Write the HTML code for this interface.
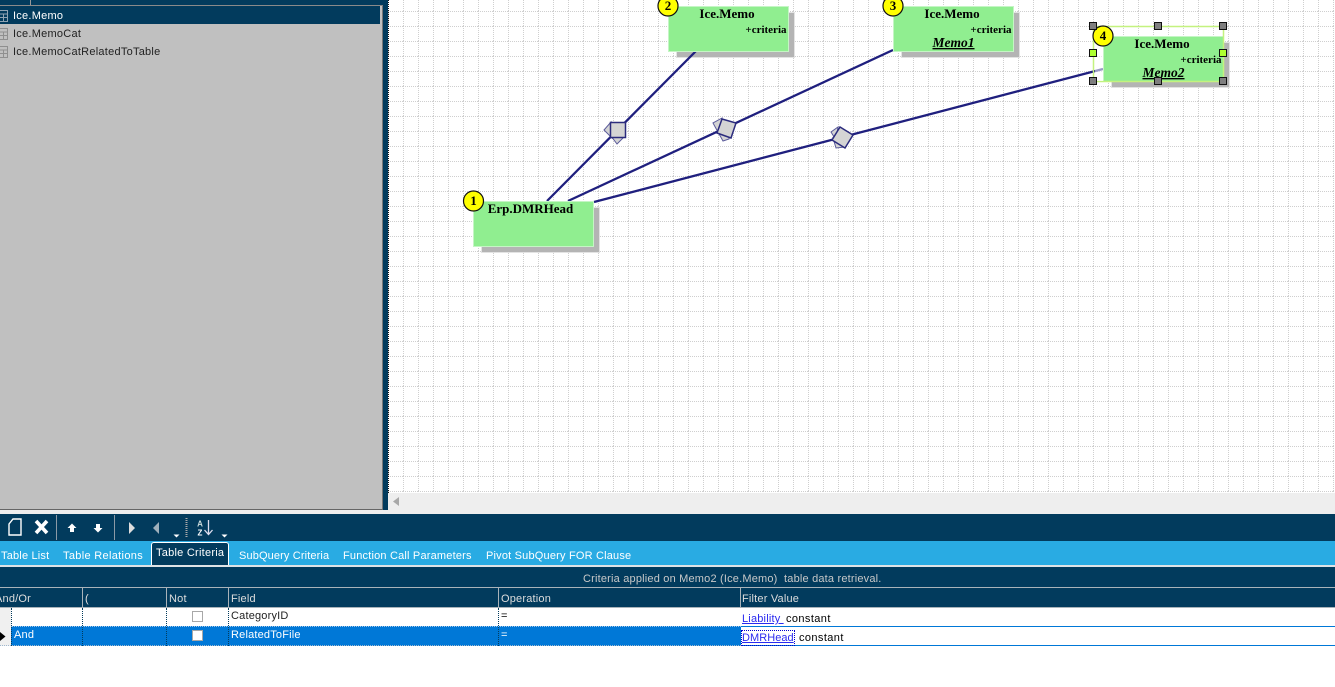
<!DOCTYPE html>
<html><head><meta charset="utf-8">
<style>
html,body{margin:0;padding:0;background:#fff}
body{width:1335px;height:687px;overflow:hidden;position:relative;font-family:"Liberation Sans",sans-serif;font-size:11px}
.a{position:absolute}
.t{position:absolute;white-space:pre;line-height:14px;letter-spacing:.19px}
.d{background:#023b5d}
.w{color:#fff}
.h{color:#ddd}
.tab{color:#fff;top:549px}
.v{position:absolute;width:0;border-left:1px dotted #023b5d}
</style></head><body>
<div class="a d" style="left:0;top:0;width:388px;height:5px"></div>
<div class="a" style="left:30px;top:0;width:1px;height:5px;background:#999"></div>
<div class="a" style="left:0;top:5px;width:383px;height:505px;background:#c0c0c0;border-top:1px solid #8a8a8a;border-bottom:1px solid #666;box-sizing:border-box;border-right:1px solid #777"></div>
<div class="a d" style="left:383px;top:0;width:5px;height:510px"></div>
<div class="a" style="left:0;top:510px;width:388px;height:4px;background:#eee"></div>
<div class="a d" style="left:0;top:6px;width:380px;height:18px"></div>
<svg class="a" style="left:0;top:10px" width="9" height="50">
<g fill="none" stroke="#8f8f8f"><path d="M-1 .5H7.500V11.500H-1M-1 4H7.500M3.500 4V11.500M-1 7.500H7.500" stroke="#8fa3b2"/>
<path d="M-1 18.500H7.500V29.500H-1M-1 22H7.500M3.500 22V29.500M-1 25.500H7.500"/>
<path d="M-1 36.500H7.500V47.500H-1M-1 40H7.500M3.500 40V47.500M-1 43.500H7.500"/></g></svg>
<div class="t w" style="left:13px;top:9px;letter-spacing:.25px">Ice.Memo</div>
<div class="t" style="left:13px;top:27px;color:#222;letter-spacing:.25px">Ice.MemoCat</div>
<div class="t" style="left:13px;top:45px;color:#222;letter-spacing:.25px">Ice.MemoCatRelatedToTable</div>

<svg class="a" style="left:388px;top:0;background:#fff" width="947" height="493" viewBox="388 0 947 493">
<defs><pattern id="g" x="388" y="11" width="15" height="15" patternUnits="userSpaceOnUse">
<path d="M0 .5H15" stroke="#cfcfcf" stroke-width="1" stroke-dasharray="1 1"/>
<path d="M.5 0V15" stroke="#cfcfcf" stroke-width="1" stroke-dasharray="1 1"/>
</pattern></defs>
<rect x="388" y="0" width="947" height="493" fill="url(#g)"/>
<path d="M388.500 0V493" stroke="#111" stroke-dasharray="1 1"/>
<g fill="#b4b4b4" stroke="#e3e3e3" stroke-width="1">
<rect x="481.500" y="207.500" width="118" height="45"/>
<rect x="676.500" y="12.500" width="118" height="45"/>
<rect x="901.500" y="12.500" width="118" height="45"/>
<rect x="1111.500" y="42.500" width="118" height="45"/>
</g>
<g stroke="#1f1f7e" stroke-width="2.300" fill="none">
<path d="M547 201L696 51"/><path d="M568 201L893 50"/><path d="M594 202L1103 69"/>
</g>
<g fill="#90ee90" stroke="#c5f5c5" stroke-width="1">
<rect x="473.500" y="201.500" width="120" height="45"/>
<rect x="668.500" y="6.500" width="120" height="45"/>
<rect x="893.500" y="6.500" width="120" height="45"/>
<rect x="1103.500" y="36.500" width="120" height="45"/>
</g>
<path d="M1093.500 26.500H1223.500V81.500H1103" fill="none" stroke="#c4f27f" stroke-width="1.500"/>
<path d="M1093.500 26.500V81.500H1103" fill="none" stroke="#c4f27f" stroke-width="1.500"/>
<rect x="1095" y="38" width="8" height="43" fill="#fff" fill-opacity=".55"/>
<g fill="#d4d4d4" stroke="#5a5a9a" stroke-width="1">
<path d="M611 122L604 130L612 138Z"/><path d="M611 136L617 144L625 136Z"/>
<path d="M722 118L713 123L719 134Z"/><path d="M718 132L723 141L729 139L730 133Z"/>
<path d="M838 127L831 132L836 140Z"/><path d="M833 138L836 148L845 147Z"/>
</g>
<g fill="#d4d4d4" stroke="#2b2b7d" stroke-width="1.500">
<rect x="610.500" y="122.500" width="15" height="15"/>
<path d="M722 119L736 123L731 138L717 133Z"/>
<path d="M840 127L853 135L845 148L832 140Z"/>
</g>
<g font-family="'Liberation Serif',serif" font-weight="bold" text-anchor="middle" fill="#000">
<g fill="#ffff00" stroke="#111" stroke-width="1.200">
<circle cx="473.500" cy="201" r="10"/><circle cx="668" cy="6" r="10"/><circle cx="893" cy="6" r="10"/><circle cx="1103" cy="36" r="10"/>
</g>
<g font-size="13" fill="#000">
<text x="473.500" y="205">1</text><text x="668" y="10">2</text><text x="893" y="10">3</text><text x="1103" y="40">4</text>
<text x="530.500" y="213">Erp.DMRHead</text>
<text x="727" y="18">Ice.Memo</text><text x="952" y="18">Ice.Memo</text><text x="1162" y="48">Ice.Memo</text>
</g>
<g font-size="11" text-anchor="end">
<text x="786.500" y="33">+criteria</text><text x="1011.500" y="33">+criteria</text><text x="1221.500" y="63">+criteria</text>
</g>
<g font-size="13.500" font-style="italic" text-decoration="underline">
<text x="953.500" y="47">Memo1</text><text x="1163.500" y="77">Memo2</text>
</g>
</g>
<g stroke="#111" stroke-width="1">
<g fill="#7f7f7f">
<rect x="1089.500" y="22.500" width="7" height="7"/><rect x="1154.500" y="22.500" width="7" height="7"/><rect x="1219.500" y="22.500" width="7" height="7"/>
<rect x="1089.500" y="77.500" width="7" height="7"/><rect x="1154.500" y="77.500" width="7" height="7"/><rect x="1219.500" y="77.500" width="7" height="7"/>
</g>
<g fill="#adff2f">
<rect x="1089.500" y="49.500" width="7" height="7"/><rect x="1219.500" y="49.500" width="7" height="7"/>
</g>
</g>
</svg>
<div class="a" style="left:388px;top:493px;width:947px;height:21px;background:#eee"></div>
<svg class="a" style="left:390px;top:496px" width="12" height="12"><path d="M3 5.500L9 1V10Z" fill="#a8a8a8"/></svg>

<div class="a d" style="left:0;top:514px;width:1335px;height:27px"></div>
<svg class="a" style="left:0;top:514px" width="240" height="27">
<path d="M9 10L13 5H21V21H9Z" fill="none" stroke="#fff" stroke-width="1.400"/>
<path d="M36 7L47 19M47 7L36 19" stroke="#fff" stroke-width="3.600"/>
<path d="M56.500 1V26M114.500 1V26" stroke="#8c9aa6"/>
<path d="M72 9.500L76.500 14H74V18H70V14H67.500Z" fill="#fff"/>
<path d="M98 18.500L102.500 14H100V10H96V14H93.500Z" fill="#fff"/>
<path d="M129 8L135 14L129 20Z" fill="#ddd"/>
<path d="M159 8L153 14L159 20Z" fill="#9fb0bc"/>
<path d="M173.500 20.500H179.500L176.500 23.500Z" fill="#fff"/>
<path d="M221.500 20.500H227.500L224.500 23.500Z" fill="#fff"/>
<path d="M186.500 4V24" stroke="#aaa" stroke-dasharray="1 1" stroke-width="2"/>
<path d="M208.500 6V20M204.500 16L208.500 20.500L212.500 16" fill="none" stroke="#dde" stroke-width="1.300"/>
<text x="200" y="12.500" text-anchor="middle" font-family="Liberation Sans" font-size="8" font-weight="bold" fill="#cdd">A</text>
<text x="200" y="21.500" text-anchor="middle" font-family="Liberation Sans" font-size="8" font-weight="bold" fill="#fff">Z</text>
</svg>

<div class="a" style="left:0;top:541px;width:1335px;height:24px;background:#29abe3"></div>
<div class="a" style="left:0;top:565px;width:1335px;height:2px;background:#dfe3e6"></div>
<div class="t tab" style="left:1px">Table List</div>
<div class="t tab" style="left:63px;letter-spacing:.32px">Table Relations</div>
<div class="a d" style="left:151px;top:542px;width:78px;height:23px;border:1px solid #fff;border-bottom:0;border-radius:3px 3px 0 0;box-sizing:border-box"></div>
<div class="t w" style="left:156px;top:546px;letter-spacing:.25px">Table Criteria</div>
<div class="t tab" style="left:239px;letter-spacing:.13px">SubQuery Criteria</div>
<div class="t tab" style="left:343px">Function Call Parameters</div>
<div class="t tab" style="left:486px">Pivot SubQuery FOR Clause</div>

<div class="a d" style="left:0;top:567px;width:1335px;height:41px"></div>
<div class="a" style="left:0;top:587px;width:1335px;height:1px;background:#a9b3ba"></div>
<div class="a" style="left:0;top:607px;width:1335px;height:1px;background:#a9b3ba"></div>
<div class="t" style="left:583px;top:572px;color:#c8c8c8">Criteria applied on Memo2 (Ice.Memo)  table data retrieval.</div>
<div class="a" style="left:82px;top:588px;width:1px;height:19px;background:#a9b3ba"></div>
<div class="a" style="left:166px;top:588px;width:1px;height:19px;background:#a9b3ba"></div>
<div class="a" style="left:228px;top:588px;width:1px;height:19px;background:#a9b3ba"></div>
<div class="a" style="left:498px;top:588px;width:1px;height:19px;background:#a9b3ba"></div>
<div class="a" style="left:740px;top:588px;width:1px;height:19px;background:#a9b3ba"></div>
<div class="t h" style="left:-5px;top:592px">And/Or</div>
<div class="t h" style="left:85px;top:592px">(</div>
<div class="t h" style="left:169px;top:592px">Not</div>
<div class="t h" style="left:231px;top:592px">Field</div>
<div class="t h" style="left:501px;top:592px">Operation</div>
<div class="t h" style="left:742px;top:592px">Filter Value</div>

<div class="a" style="left:0;top:608px;width:11px;height:38px;background:#f0f0f0"></div>
<div class="a" style="left:11px;top:626px;width:730px;height:20px;background:#0078d7"></div>
<div class="a" style="left:741px;top:626px;width:594px;height:1px;background:#0078d7"></div>
<div class="a" style="left:741px;top:645px;width:594px;height:1px;background:#0078d7"></div>
<div class="a" style="left:11px;top:626px;width:730px;border-top:1px dotted #9fc4e8"></div>
<div class="a" style="left:0;top:645px;width:741px;border-top:1px dotted #9fb8cf"></div>
<div class="v" style="left:11px;top:608px;height:38px"></div>
<div class="v" style="left:82px;top:608px;height:38px"></div>
<div class="v" style="left:166px;top:608px;height:38px"></div>
<div class="v" style="left:228px;top:608px;height:38px"></div>
<div class="v" style="left:498px;top:608px;height:38px"></div>
<svg class="a" style="left:0;top:631px" width="7" height="12"><path d="M0 1L5.500 5.500L0 10Z" fill="#000"/></svg>
<div class="a" style="left:192px;top:611px;width:11px;height:11px;background:#fff;border:1px solid #a8a8a8;box-sizing:border-box"></div>
<div class="a" style="left:192px;top:630px;width:11px;height:11px;background:#fff;border:1px solid #a8a8a8;box-sizing:border-box"></div>
<div class="t" style="left:231px;top:609px;color:#222">CategoryID</div>
<div class="t w" style="left:231px;top:628px">RelatedToFile</div>
<div class="t w" style="left:14px;top:628px">And</div>
<div class="t" style="left:501px;top:609px;color:#000">=</div>
<div class="t w" style="left:501px;top:628px">=</div>
<div class="t" style="left:742px;top:612px;color:#2a2af0;text-decoration:underline">Liability </div>
<div class="t" style="left:786px;top:612px;color:#000;letter-spacing:.4px">constant</div>
<div class="t" style="left:742px;top:631px;color:#2a2af0;text-decoration:underline;outline:1px dotted #00c;letter-spacing:.05px">DMRHead</div>
<div class="t" style="left:799px;top:631px;color:#000;letter-spacing:.4px">constant</div>
</body></html>
